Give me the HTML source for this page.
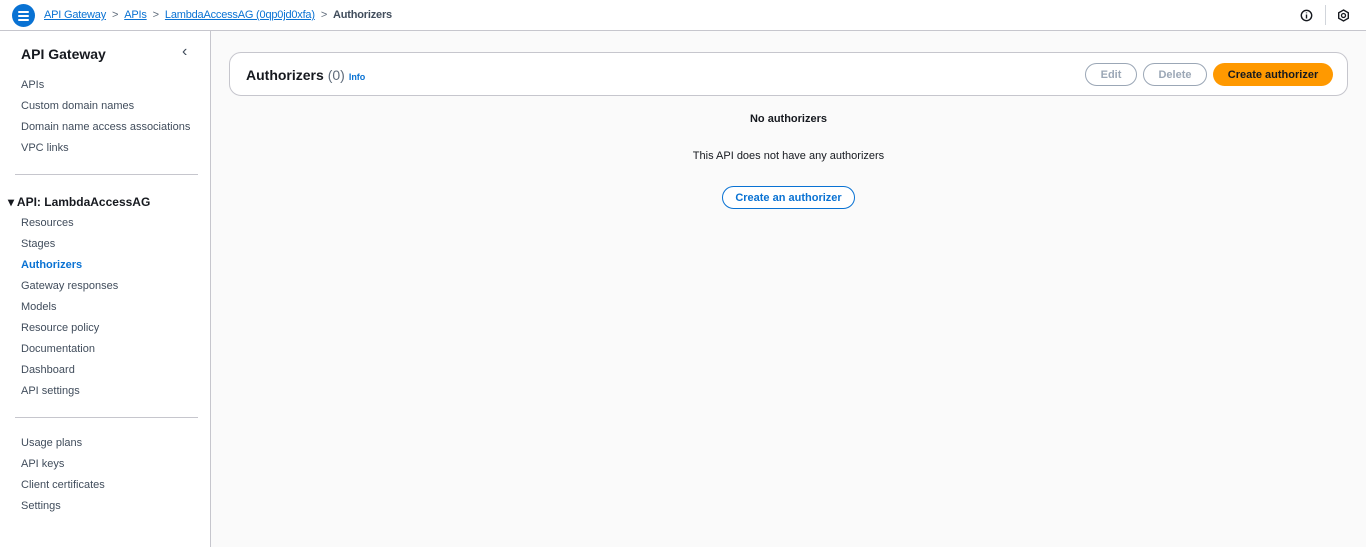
<!DOCTYPE html>
<html><head><style>
*{margin:0;padding:0;box-sizing:border-box}
body{width:1366px;height:547px;overflow:hidden;font-family:"Liberation Sans",sans-serif;background:#fafafa;color:#16191f;position:relative}
.top{position:absolute;left:0;top:0;width:1366px;height:31px;background:#fff;border-bottom:1px solid #c6c6cd}
.menu{position:absolute;left:12px;top:4px;width:23px;height:23px;border-radius:50%;background:#0972d3}
.menu i{position:absolute;left:6px;width:11px;height:2px;background:#fff;border-radius:1px}
.bc{position:absolute;left:44px;top:9px;font-size:11px;white-space:nowrap;letter-spacing:-0.2px}
.bc a{color:#0972d3;text-decoration:underline}
.bc .s{color:#5f6b7a;margin:0 6px}
.bc b{color:#414d5c}
.side{position:absolute;left:0;top:31px;width:211px;height:516px;background:#fff;border-right:1px solid #c6c6cd}
.side .t{position:absolute;left:21px;top:15px;font-size:14px;font-weight:bold}
.side .x{position:absolute;left:182px;top:12px;font-size:16px;color:#414d5c}
.item{position:absolute;left:21px;font-size:11px;color:#414d5c}
.hr{position:absolute;left:15px;width:183px;height:1px;background:#c6c6cd}
.card{position:absolute;left:229px;top:52px;width:1119px;height:44px;background:#fff;border:1px solid #c6c6cd;border-radius:12px}
.card h1{position:absolute;left:16px;top:14px;font-size:14px;font-weight:bold}
.card h1 span{font-weight:normal;color:#5f6b7a}
.card h1 em{font-style:normal;font-size:9px;color:#0972d3;margin-left:4px}
.btn{position:absolute;top:10px;height:23px;border-radius:12px;font-size:11px;font-weight:bold;display:flex;align-items:center;justify-content:center}
.dis{border:1px solid #9ba7b6;color:#9ba7b6;background:#fff}
.c{position:absolute;left:229px;width:1119px;text-align:center;font-size:11px}
</style></head><body>
<div class="top">
<div class="menu"><i style="top:7px"></i><i style="top:11px"></i><i style="top:15px"></i></div>
<div class="bc"><a>API Gateway</a><span class="s">&gt;</span><a>APIs</a><span class="s">&gt;</span><a>LambdaAccessAG (0qp0jd0xfa)</a><span class="s">&gt;</span><b>Authorizers</b></div>
<svg style="position:absolute;left:1300px;top:9px" width="13" height="13" viewBox="0 0 13 13"><circle cx="6.5" cy="6.5" r="5.2" fill="none" stroke="#16191f" stroke-width="1.4"/><path d="M6.5 5.5v4M6.5 3.5v.8" stroke="#16191f" stroke-width="1.4"/></svg>
<div style="position:absolute;left:1325px;top:5px;width:1px;height:20px;background:#d1d5db"></div>
<svg style="position:absolute;left:1337px;top:9px" width="13" height="13" viewBox="0 0 13 13"><path d="M6.5 1L11.3 3.8v5.4L6.5 12 1.7 9.2V3.8z" fill="none" stroke="#16191f" stroke-width="1.4"/><circle cx="6.5" cy="6.5" r="2" fill="none" stroke="#16191f" stroke-width="1.3"/></svg>
</div>
<div class="side">
<div class="t">API Gateway</div><div class="x">&#x2039;</div>
<div class="item" style="top:48px">APIs</div>
<div class="item" style="top:69px">Custom domain names</div>
<div class="item" style="top:90px">Domain name access associations</div>
<div class="item" style="top:111px">VPC links</div>
<div class="hr" style="top:143px"></div>
<div class="item" style="left:8px;top:164px;font-size:12px;font-weight:bold;color:#16191f">▾ API: LambdaAccessAG</div>
<div class="item" style="top:186px">Resources</div>
<div class="item" style="top:207px">Stages</div>
<div class="item" style="top:228px;color:#0972d3;font-weight:bold">Authorizers</div>
<div class="item" style="top:249px">Gateway responses</div>
<div class="item" style="top:270px">Models</div>
<div class="item" style="top:291px">Resource policy</div>
<div class="item" style="top:312px">Documentation</div>
<div class="item" style="top:333px">Dashboard</div>
<div class="item" style="top:354px">API settings</div>
<div class="hr" style="top:386px"></div>
<div class="item" style="top:406px">Usage plans</div>
<div class="item" style="top:427px">API keys</div>
<div class="item" style="top:448px">Client certificates</div>
<div class="item" style="top:469px">Settings</div>
</div>
<div class="card">
<h1>Authorizers <span>(0)</span><em>Info</em></h1>
<div class="btn dis" style="left:855px;width:52px">Edit</div>
<div class="btn dis" style="left:913px;width:64px">Delete</div>
<div class="btn" style="left:983px;width:120px;background:#ff9900;color:#16191f">Create authorizer</div>
</div>
<div class="c" style="top:113px;font-weight:bold">No authorizers</div>
<div class="c" style="top:150px">This API does not have any authorizers</div>
<div style="position:absolute;left:722px;top:186px;width:133px;height:23px;border:1px solid #0972d3;border-radius:12px;background:#fff;color:#0972d3;font-size:11px;font-weight:bold;display:flex;align-items:center;justify-content:center">Create an authorizer</div>
</body></html>
